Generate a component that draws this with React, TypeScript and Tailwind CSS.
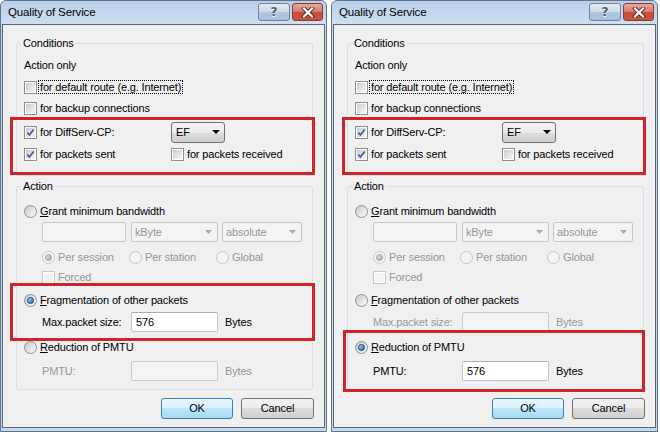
import clsx from "clsx";

type Mode = "frag" | "pmtu";

const GRAY = "text-[#979797]";

function CheckBox({ checked = false, disabled = false }: { checked?: boolean; disabled?: boolean }) {
  return (
    <span
      className={clsx(
        "relative flex h-[13px] w-[13px] shrink-0 items-center justify-center border bg-white",
        disabled ? "border-[#c6c6c6]" : "border-[#8e8f8f]"
      )}
    >
      <span
        className={clsx(
          "h-[9px] w-[9px]",
          disabled ? "bg-[#f3f3f3]" : "bg-gradient-to-br from-[#c8ccd2] to-[#f7f7f7]"
        )}
      />
      {checked && (
        <svg className="absolute left-0 top-0" width="11" height="11" viewBox="0 0 11 11">
          <path d="M2.3 5.6 L4.4 8 L8.7 2.5" fill="none" stroke="#3d5a96" strokeWidth="1.6" />
        </svg>
      )}
    </span>
  );
}

function Radio({ checked = false, disabled = false }: { checked?: boolean; disabled?: boolean }) {
  return (
    <span
      className={clsx(
        "flex h-[13px] w-[13px] shrink-0 items-center justify-center rounded-full border",
        disabled
          ? "border-[#c6c6c6] bg-[#f4f4f4]"
          : "border-[#8e8f8f] bg-gradient-to-br from-[#c4c8ce] to-[#fbfbfb]"
      )}
    >
      {checked &&
        (disabled ? (
          <span className="h-[7px] w-[7px] rounded-full border border-[#9c9c9c] bg-gradient-to-br from-[#e6e6e6] to-[#a6a6a6]" />
        ) : (
          <span className="h-[7px] w-[7px] rounded-full border border-[#173f6e] bg-gradient-to-br from-[#a9dcfa] to-[#1a6bb0]" />
        ))}
    </span>
  );
}

function TextBox({ value, disabled = false, className }: { value?: string; disabled?: boolean; className?: string }) {
  return (
    <div
      className={clsx(
        "flex h-[20px] items-center rounded-[2px] border pl-[4px]",
        disabled ? "border-[#c9c9c9] bg-[#f4f4f4]" : "border-[#c2c4c8] border-t-[#abadb3] bg-white",
        className
      )}
    >
      {value}
    </div>
  );
}

function Combo({ label, className }: { label: string; className?: string }) {
  return (
    <div
      className={clsx(
        "flex h-[20px] items-center justify-between rounded-[2px] border border-[#c6c6c6] bg-[#f4f4f4] pl-[3px] pr-[5px]",
        GRAY,
        className
      )}
    >
      <span>{label}</span>
      <svg width="7" height="4" viewBox="0 0 7 4">
        <path d="M0 0h7L3.5 4z" fill="#a8a8a8" />
      </svg>
    </div>
  );
}

function GroupBox({ title, className, children }: { title: string; className?: string; children: React.ReactNode }) {
  return (
    <fieldset className={clsx("ml-[13px] w-[297px] rounded-[3px] border border-[#d5dfe5]", className)}>
      <legend className="ml-[4px] px-[2px] leading-[14px]">{title}</legend>
      {children}
    </fieldset>
  );
}

function WinButton({ children, primary = false }: { children: React.ReactNode; primary?: boolean }) {
  return (
    <div
      className={clsx(
        "flex h-[21px] items-center justify-center rounded-[3px] border",
        primary
          ? "w-[72px] border-[#3c7fb1] bg-[linear-gradient(#eaf6fd,#d9f0fc_50%,#bee6fd_50%,#a7d9f5)]"
          : "w-[73px] border-[#707070] bg-[linear-gradient(#f2f2f2,#ebebeb_50%,#dddddd_50%,#cfcfcf)]"
      )}
    >
      {children}
    </div>
  );
}

function Dialog({ mode }: { mode: Mode }) {
  const frag = mode === "frag";
  return (
    <div className="relative flex h-[432px] w-[327px] shrink-0 flex-col rounded-t-[6px] border border-[#61748c] bg-[#c5d8ee]">
      {/* title bar */}
      <div className="flex h-[23px] items-center justify-between rounded-t-[6px] bg-gradient-to-b from-[#b8cfea] to-[#cfdff2] pl-[7px] pr-[3px]">
        <span className="text-[11.5px] text-black">Quality of Service</span>
        <div className="flex gap-[2px] self-start pt-[2px]">
          <div className="flex h-[18px] w-[32px] items-center justify-center rounded-[3px] border border-[#6f8299] bg-[linear-gradient(#e3ebf5,#cbd9ea_50%,#b3c7e0_50%,#a9bfdc)]">
            <span className="font-['DejaVu_Sans',sans-serif] text-[12px] font-bold leading-none text-[#4b5a6c] [text-shadow:0_1px_0_#ffffff]">
              ?
            </span>
          </div>
          <div className="flex h-[18px] w-[31px] items-center justify-center rounded-[3px] border border-[#8b3a32] bg-[linear-gradient(#e9a99b,#d77a69_50%,#c74a36_50%,#c9553e)]">
            <svg width="14" height="11" viewBox="0 0 14 11">
              <path d="M3 1.5 L11 9.5 M11 1.5 L3 9.5" stroke="#5c2a24" strokeWidth="4" strokeLinecap="square" />
              <path d="M3 1.5 L11 9.5 M11 1.5 L3 9.5" stroke="#ffffff" strokeWidth="2.2" strokeLinecap="square" />
            </svg>
          </div>
        </div>
      </div>

      {/* client area */}
      <div className="mx-[1px] mb-[3px] flex flex-1 flex-col border border-[#55677e] bg-[#f0f0f0] text-black">
        <GroupBox title="Conditions" className="mt-[11px]">
          <div className="flex flex-col pb-[12px] pl-[7px] pt-[4px]">
            <div className="flex h-[22px] items-center">Action only</div>
            <div className="flex h-[22px] items-center gap-[2px]">
              <CheckBox />
              <span className="px-[1px] leading-[12px] outline-1 outline-dotted outline-black">
                for default route (e.g. Internet)
              </span>
            </div>
            <div className="flex h-[21px] items-center gap-[3px]">
              <CheckBox />
              <span>for backup connections</span>
            </div>
            <div className="flex h-[26px] items-center">
              <div className="flex w-[147px] items-center gap-[3px]">
                <CheckBox checked />
                <span>for DiffServ-CP:</span>
              </div>
              <div className="flex h-[21px] w-[54px] items-center justify-between rounded-[3px] border border-[#707070] bg-[linear-gradient(#f2f2f2,#ebebeb_50%,#dddddd_50%,#cfcfcf)] pl-[4px] pr-[4px]">
                <span>EF</span>
                <svg width="8" height="4" viewBox="0 0 8 4">
                  <path d="M0 0h8L4 4z" fill="#000" />
                </svg>
              </div>
            </div>
            <div className="flex h-[18px] items-center">
              <div className="flex w-[147px] items-center gap-[3px]">
                <CheckBox checked />
                <span>for packets sent</span>
              </div>
              <div className="flex items-center gap-[3px]">
                <CheckBox />
                <span>for packets received</span>
              </div>
            </div>
          </div>
        </GroupBox>

        <GroupBox title="Action" className="mt-[3px]">
          <div className="flex flex-col pb-[8px] pl-[7px] pt-[7px]">
            <div className="flex h-[22px] items-center gap-[3px]">
              <Radio />
              <span>
                <span className="underline underline-offset-1">G</span>rant minimum bandwidth
              </span>
            </div>
            <div className="flex h-[20px] items-center pl-[18px]">
              <TextBox disabled className="w-[84px]" />
              <Combo label="kByte" className="ml-[5px] w-[87px]" />
              <Combo label="absolute" className="ml-[4px] w-[80px]" />
            </div>
            <div className={clsx("mt-[4px] flex h-[22px] items-center pl-[18px]", GRAY)}>
              <div className="flex w-[87px] items-center gap-[3px]">
                <Radio checked disabled />
                <span>Per session</span>
              </div>
              <div className="flex w-[87px] items-center gap-[3px]">
                <Radio disabled />
                <span>Per station</span>
              </div>
              <div className="flex items-center gap-[3px]">
                <Radio disabled />
                <span>Global</span>
              </div>
            </div>
            <div className={clsx("flex h-[18px] items-center gap-[3px] pl-[18px]", GRAY)}>
              <CheckBox disabled />
              <span>Forced</span>
            </div>
            <div className="mt-[4px] flex h-[20px] items-center gap-[3px]">
              <Radio checked={frag} />
              <span>
                <span className="underline underline-offset-1">F</span>ragmentation of other packets
              </span>
            </div>
            <div className={clsx("mt-[2px] flex h-[20px] items-center pl-[18px]", !frag && GRAY)}>
              <span className="w-[89px]">Max.packet size:</span>
              <TextBox disabled={!frag} value={frag ? "576" : ""} className="w-[87px] text-black" />
              <span className="ml-[7px]">Bytes</span>
            </div>
            <div className="mt-[5px] flex h-[20px] items-center gap-[3px]">
              <Radio checked={!frag} />
              <span>
                <span className="underline underline-offset-1">R</span>eduction of PMTU
              </span>
            </div>
            <div className={clsx("mt-[4px] flex h-[20px] items-center pl-[18px]", frag && GRAY)}>
              <span className="w-[89px]">PMTU:</span>
              <TextBox disabled={frag} value={frag ? "" : "576"} className="w-[87px] text-black" />
              <span className="ml-[7px]">Bytes</span>
            </div>
          </div>
        </GroupBox>

        <div className="mr-[10px] mt-[8px] flex justify-end gap-[8px]">
          <WinButton primary>OK</WinButton>
          <WinButton>Cancel</WinButton>
        </div>
      </div>

      {/* red annotation frames */}
      {frag ? (
        <>
          <div className="absolute left-[9px] top-[116px] h-[58px] w-[305px] border-[3px] border-[#d2232b]" />
          <div className="absolute left-[9px] top-[282px] h-[58px] w-[305px] border-[3px] border-[#d2232b]" />
        </>
      ) : (
        <>
          <div className="absolute left-[10px] top-[116px] h-[58px] w-[304px] border-[3px] border-[#d2232b]" />
          <div className="absolute left-[11px] top-[329px] h-[62px] w-[302px] border-[3px] border-[#d2232b]" />
        </>
      )}
    </div>
  );
}

export default function App() {
  return (
    <div className="flex h-[437px] w-[660px] gap-[4px] bg-white font-['Liberation_Sans',Arial,sans-serif] text-[11px] tracking-[-0.15px]">
      <Dialog mode="frag" />
      <Dialog mode="pmtu" />
    </div>
  );
}
